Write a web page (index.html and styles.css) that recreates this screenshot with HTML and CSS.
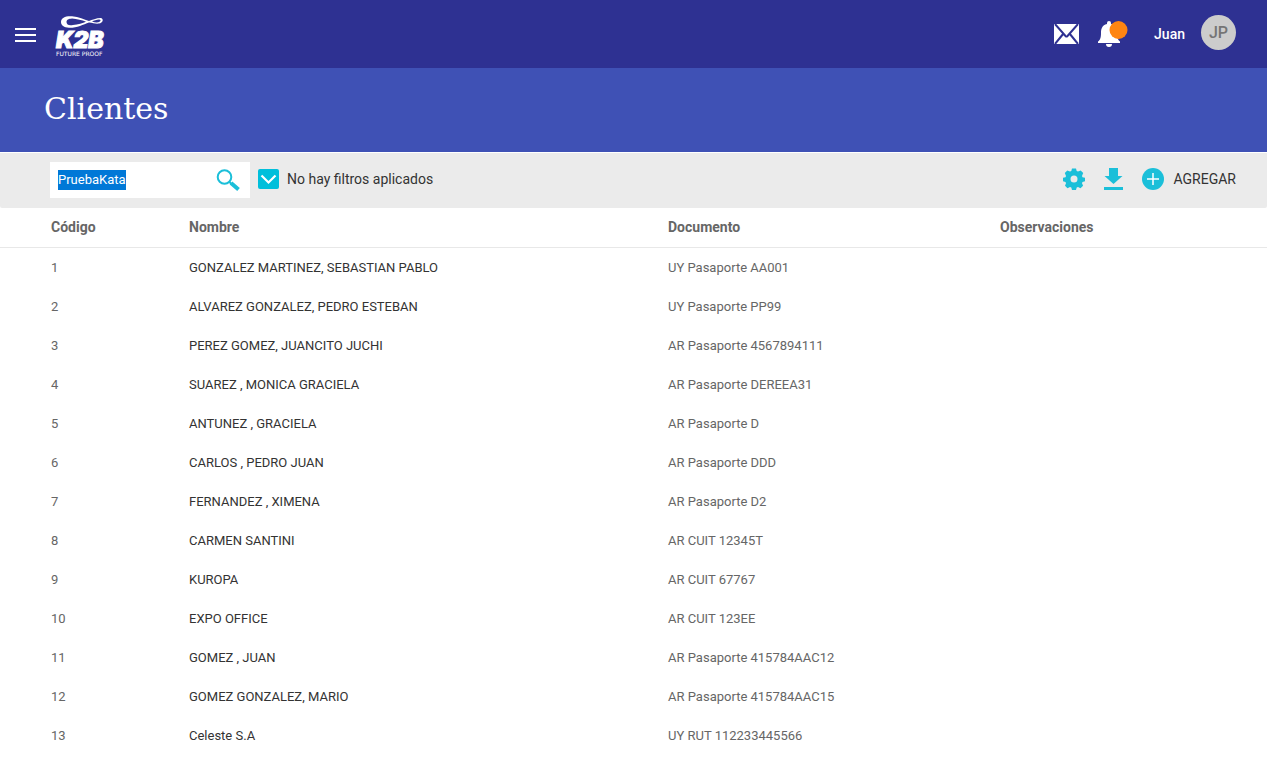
FILE: index.html
```html
<!DOCTYPE html>
<html lang="es">
<head>
<meta charset="utf-8">
<meta name="viewport" content="width=device-width, initial-scale=1">
<title>Clientes</title>
<link rel="stylesheet" href="styles.css">
</head>
<body>
<header class="topbar">
  <button class="icon-button menu" type="button" aria-label="Menú">
    <svg width="21" height="14" viewBox="0 0 21 14"><path d="M0 1h21M0 7h21M0 13h21" stroke="#fff" stroke-width="2"/></svg>
  </button>
  <a class="logo" href="#" aria-label="K2B Future Proof">
    <svg width="52" height="46" viewBox="0 0 52 46" fill="#fff">
      <path fill-rule="evenodd" d="M6 10C6 5.500 11 3.800 17 4.300C24 5 29 7.500 34 9C37 8 41 6 46 6C49 7 48 11 44 11.500C41 12 38 11 34 10.500C28 12.500 22 16 14 15.800C9 15.500 6 13.500 6 10ZM11.500 10C11.500 12.500 14 14 18 13C23 12.500 28 11 31 9.700C27 8 22 7 17 6.500C14 6.800 11.500 7.500 11.500 10ZM37 9.600C40 10.600 43 10.800 44.500 9.800C46 9 46 7.500 44 7.500C41.500 7.500 39 8.500 37 9.600Z"/>
      <text class="logo-name" x="1" y="36">K2B</text>
      <text class="logo-tag" x="1" y="44">FUTURE PROOF</text>
    </svg>
  </a>
  <div class="user">
    <button class="icon-button mail" type="button" aria-label="Mensajes">
      <svg width="25" height="20" viewBox="0 0 25 20"><path d="M0 0h25v20H0z" fill="#fff"/><path d="M1 0l10.500 12q1 1 2 0L24 0M1 20l8.500-10.500M24 20l-8.500-10.500" fill="none" stroke="#2e3192" stroke-width="2"/></svg>
    </button>
    <button class="icon-button bell" type="button" aria-label="Notificaciones">
      <svg width="30" height="27" viewBox="0 0 30 27"><path d="M9 3V2q0-2 2-2t2 2v1c5 1 6 5 6 9 0 5 1 7 3 8.500V22H0v-1.500c2-1.500 3-3.500 3-8.500 0-4 1-8 6-9zM8 23h6q0 3-3 3t-3-3z" fill="#fff"/><circle cx="20.500" cy="9" r="9" fill="#ff8512"/></svg>
    </button>
    <span class="user-name">Juan</span>
    <span class="avatar">JP</span>
  </div>
</header>
<main>
  <div class="title-band"><h1 class="title">Clientes</h1></div>
  <div class="toolbar">
    <form class="search">
      <input class="search-input" id="search" type="text" value="PruebaKata" aria-label="Buscar" autocomplete="off" spellcheck="false">
      <button class="icon-button" type="button" aria-label="Buscar">
        <svg width="24" height="23" viewBox="0 0 24 23" fill="none" stroke="#1bbfd9"><circle cx="8.500" cy="8" r="6.800" stroke-width="2"/><path d="M13 12.500l3 3" stroke-width="2"/><path d="M15 14l7.500 6.500" stroke-width="4"/></svg>
      </button>
    </form>
    <button class="filters" type="button">
      <svg width="21" height="20" viewBox="0 0 21 20"><rect width="21" height="20" rx="2" fill="#00bfdb"/><path d="M3.500 6.500l7 7 7-7" fill="none" stroke="#fff" stroke-width="2.200"/></svg>
      <span>No hay filtros aplicados</span>
    </button>
    <div class="actions">
      <button class="icon-button" type="button" aria-label="Configuración">
        <svg width="22" height="22" viewBox="0 0 22 22"><path fill="#1bbfd9" fill-rule="evenodd" d="M9 0.500h4l.7 2.500 1.300.5 2.700-1 2.500 2.500L19 8l.5 1.200 2.500.5v3.600l-2.500.7-.5 1.200 1.100 2.600-2.600 2.500L15 19l-1.300.6-.7 2.400H9l-.7-2.400L7 19l-2.500 1.300L2 17.800 3 15.200 2.500 14 0 13.300V9.700l2.500-.5L3 8 1.800 5l2.500-2.500L7 3.500l1.300-.5zM11 7.500a3.500 3.500 0 1 0 0 7 3.500 3.500 0 0 0 0-7z"/></svg>
      </button>
      <button class="icon-button" type="button" aria-label="Descargar">
        <svg width="19" height="22" viewBox="0 0 19 22" fill="#1bbfd9"><path d="M5 0h9v8h4.500l-9 8-9-8H5zM0 19h19v3H0z"/></svg>
      </button>
      <button class="add" type="button">
        <svg width="22" height="22" viewBox="0 0 22 22"><circle cx="11" cy="11" r="11" fill="#1bbfd9"/><path d="M11 5v12M5 11h12" stroke="#fff" stroke-width="1.500"/></svg>
        <span>AGREGAR</span>
      </button>
    </div>
  </div>
  <table class="grid">
    <thead>
      <tr><th class="col-code" scope="col">Código</th><th class="col-name" scope="col">Nombre</th><th class="col-doc" scope="col">Documento</th><th scope="col">Observaciones</th></tr>
    </thead>
    <tbody>
      <tr><td>1</td><td class="name">GONZALEZ MARTINEZ, SEBASTIAN PABLO</td><td>UY Pasaporte AA001</td><td></td></tr>
      <tr><td>2</td><td class="name">ALVAREZ GONZALEZ, PEDRO ESTEBAN</td><td>UY Pasaporte PP99</td><td></td></tr>
      <tr><td>3</td><td class="name">PEREZ GOMEZ, JUANCITO JUCHI</td><td>AR Pasaporte 4567894111</td><td></td></tr>
      <tr><td>4</td><td class="name">SUAREZ , MONICA GRACIELA</td><td>AR Pasaporte DEREEA31</td><td></td></tr>
      <tr><td>5</td><td class="name">ANTUNEZ , GRACIELA</td><td>AR Pasaporte D</td><td></td></tr>
      <tr><td>6</td><td class="name">CARLOS , PEDRO JUAN</td><td>AR Pasaporte DDD</td><td></td></tr>
      <tr><td>7</td><td class="name">FERNANDEZ , XIMENA</td><td>AR Pasaporte D2</td><td></td></tr>
      <tr><td>8</td><td class="name">CARMEN SANTINI</td><td>AR CUIT 12345T</td><td></td></tr>
      <tr><td>9</td><td class="name">KUROPA</td><td>AR CUIT 67767</td><td></td></tr>
      <tr><td>10</td><td class="name">EXPO OFFICE</td><td>AR CUIT 123EE</td><td></td></tr>
      <tr><td>11</td><td class="name">GOMEZ , JUAN</td><td>AR Pasaporte 415784AAC12</td><td></td></tr>
      <tr><td>12</td><td class="name">GOMEZ GONZALEZ, MARIO</td><td>AR Pasaporte 415784AAC15</td><td></td></tr>
      <tr><td>13</td><td class="name">Celeste S.A</td><td>UY RUT 112233445566</td><td></td></tr>
    </tbody>
  </table>
</main>
<script src="script.js"></script>
</body>
</html>
```
FILE: styles.css
```css
* { box-sizing: border-box; }
body {
  margin: 0;
  padding-right: 17px;
  background: #fff;
  color: #666;
  font: 13px/20px Roboto, "Liberation Sans", sans-serif;
}
svg { display: block; }
button { padding: 0; border: 0; background: none; color: #333; font: inherit; cursor: pointer; }

.topbar {
  display: flex;
  align-items: center;
  height: 68px;
  padding: 2px 31px 0 15px;
  background: #2e3192;
}
.logo { margin-left: 19px; }
.logo-name { font: italic 900 23px Inter, sans-serif; stroke: #fff; stroke-width: 1px; }
.logo-tag { font: 6px "DejaVu Sans", sans-serif; }
.user { display: flex; align-items: center; margin: 0 0 2px auto; color: #fff; }
.bell { margin-left: 19px; }
.user-name { margin: 0 16px 0 26px; font-size: 14px; font-weight: 500; }
.avatar {
  display: grid;
  place-items: center;
  width: 35px;
  height: 35px;
  margin-bottom: 3px;
  border-radius: 50%;
  background: #ccc;
  color: #757575;
  font-size: 16px;
  font-weight: 500;
}

.title-band { padding: 21px 44px 23px; background: #3f51b5; }
.title { margin: 0; color: #fff; font: 400 30px/40px "Roboto Slab", "DejaVu Serif", serif; }

.toolbar {
  display: flex;
  align-items: center;
  margin-top: 1px;
  padding: 9px 31px 10px 50px;
  border-radius: 0 0 2px 2px;
  background: #ebebeb;
  color: #333;
  font-size: 14px;
}
.search { display: flex; align-items: center; width: 200px; height: 36px; padding: 0 10px 0 8px; background: #fff; }
.search-input { flex: 1; min-width: 0; padding: 0; border: 0; outline: 0; color: #333; font: 13px/20px Roboto, "Liberation Sans", sans-serif; }
.search-input::selection { background: #0078d7; color: #fff; }
.filters { display: flex; align-items: center; gap: 8px; margin: 0 0 2px 8px; }
.actions { display: flex; align-items: center; gap: 19px; margin: 0 0 2px auto; }
.add { display: flex; align-items: center; gap: 10px; }

.grid { width: 100%; border-collapse: collapse; table-layout: fixed; }
.grid th, .grid td { height: 39px; padding: 2px 0 0; text-align: left; }
.grid th { padding: 0 0 1px; font-size: 14px; font-weight: 700; }
.grid thead tr { border-bottom: 1px solid #e8e8e8; }
.grid th:first-child, .grid td:first-child { padding-left: 51px; }
.col-code { width: 189px; }
.col-name { width: 479px; }
.col-doc { width: 332px; }
.name { color: #333; }
```
FILE: script.js
```js
const search = document.getElementById('search');
search.focus();
search.select();
```
